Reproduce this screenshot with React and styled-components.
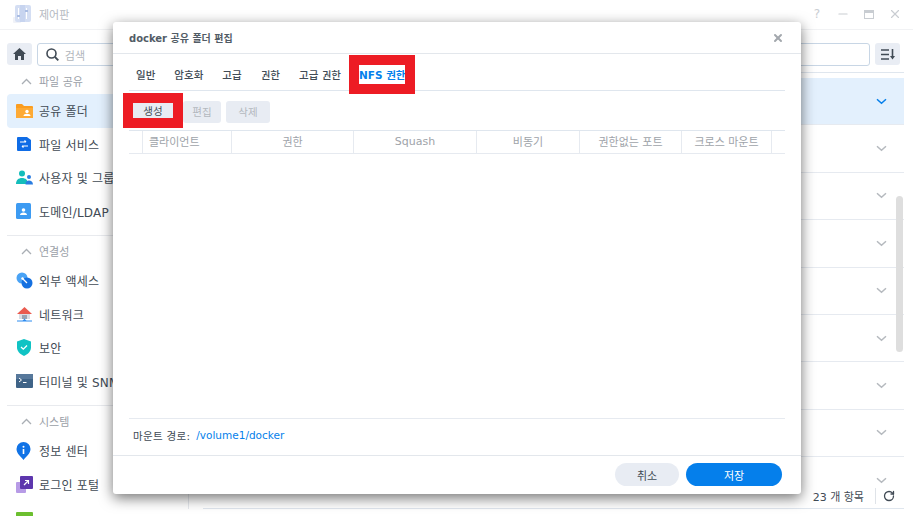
import React from "react";
import styled, { createGlobalStyle } from "styled-components";
import { RotateCw, Minus, X } from "lucide-react";

const GlobalStyle = createGlobalStyle`
  html, body {
    margin: 0;
    padding: 0;
    background: #fff;
  }
  * {
    box-sizing: border-box;
  }
`;

const Page = styled.div`
  position: relative;
  width: 913px;
  height: 516px;
  overflow: hidden;
  background: #fff;
  color: #414b55;
  font-family: "DejaVu Sans", "Noto Sans CJK KR", sans-serif;
  font-size: 11px;
`;

const TitleBar = styled.header`
  height: 30px;
  display: flex;
  align-items: center;
  padding: 0 5px 1px 12px;
  border-bottom: 1px solid #f1f2f4;
  > svg {
    opacity: 0.75;
  }
`;

const AppName = styled.span`
  margin-left: 7px;
  color: #b4b9bf;
  font-size: 11px;
  flex: 1;
`;

const WindowButton = styled.span`
  width: 26px;
  display: flex;
  align-items: center;
  justify-content: center;
  color: #c9cdd2;
  font-size: 12px;
`;

const Toolbar = styled.div`
  height: 42px;
  display: flex;
  align-items: flex-start;
  padding: 13px 13px 0 7px;
`;

const IconButton = styled.button`
  width: 25px;
  height: 22px;
  padding: 0;
  display: flex;
  align-items: center;
  justify-content: center;
  border: 0;
  border-radius: 3px;
  background: #e9edf4;
  color: #414b55;
`;

const SortButton = styled(IconButton)`
  margin-left: 5px;
`;

const SearchField = styled.div`
  height: 23px;
  display: flex;
  align-items: center;
  gap: 6px;
  padding: 0 8px;
  border: 1px solid #c8d6e5;
  border-radius: 3px;
  color: #b0b5bb;
  width: ${(p) => p.$width}px;
  margin-left: ${(p) => p.$gap}px;
  svg {
    color: #414b55;
  }
`;

const Body = styled.div`
  display: flex;
`;

const Sidebar = styled.nav`
  width: 188px;
  flex: none;
  padding: 0 0 0 7px;
`;

const Section = styled.section`
  border-top: ${(p) => (p.$first ? "0" : "1px solid #e8eaee")};
  padding: ${(p) => (p.$first ? "0" : "2px")} 0 7px;
`;

const SectionHead = styled.div`
  height: ${(p) => (p.$first ? "22px" : "26px")};
  padding: ${(p) => (p.$first ? "0 0 4px 13px" : "0 0 0 13px")};
  display: flex;
  align-items: center;
  gap: 6px;
  color: #9aa0a7;
  font-size: 11px;
  svg {
    color: #a9aeb4;
  }
`;

const NavItem = styled.div`
  height: 33.5px;
  display: flex;
  align-items: center;
  padding-left: 9px;
  border-radius: 4px;
  white-space: nowrap;
  font-size: 12px;
  letter-spacing: 0.2px;
  background: ${(p) => (p.$active ? "#e3f0fd" : "transparent")};
`;

const NavIcon = styled.span`
  width: 23px;
  flex: none;
  display: flex;
  align-items: center;
`;

const Main = styled.main`
  flex: 1;
  height: 437px;
  margin-right: 9px;
  padding-left: 14px;
  display: flex;
  flex-direction: column;
  border-left: 1px solid #e6e9ee;
`;

const List = styled.div`
  position: relative;
  height: 413px;
  overflow: hidden;
  padding-top: 5px;
  border-top: 1px solid #dfe6ee;
`;

const Row = styled.div`
  height: 47.4px;
  display: flex;
  align-items: center;
  justify-content: flex-end;
  padding-right: 17px;
  border-bottom: 1px solid #e6eaf0;
  color: ${(p) => (p.$active ? "#057feb" : "#b5b9be")};
  background: ${(p) => (p.$active ? "#e3f0fd" : "transparent")};
`;

const ScrollThumb = styled.div`
  position: absolute;
  top: 123px;
  right: 1px;
  width: 7px;
  height: 156px;
  border-radius: 4px;
  background: #dedede;
`;

const ListFooter = styled.div`
  height: 24px;
  display: flex;
  align-items: center;
  justify-content: flex-end;
  padding: 0 9px 2px 0;
  border-bottom: 1px solid #dfe6ee;
  font-size: 11px;
`;

const FooterSep = styled.span`
  width: 1px;
  height: 16px;
  margin: 0 7px 0 11px;
  background: #dfe3e8;
`;

const Modal = styled.div`
  position: absolute;
  left: 113px;
  top: 22px;
  width: 688px;
  height: 472px;
  display: flex;
  flex-direction: column;
  background: #fff;
  border-radius: 3px;
  box-shadow: 0 4px 14px rgba(0, 0, 0, 0.55);
`;

const ModalHead = styled.div`
  height: 32px;
  flex: none;
  display: flex;
  align-items: center;
  justify-content: space-between;
  padding: 0 17px 0 16px;
  border-bottom: 1px solid #e3e7ec;
  font-weight: 700;
  font-size: 10px;
  color: #525c66;
  svg {
    color: #a3a8ad;
  }
`;

const ModalBody = styled.div`
  position: relative;
  flex: 1;
  display: flex;
  flex-direction: column;
  padding: 0 16px;
`;

const Tabs = styled.div`
  height: 37px;
  flex: none;
  display: flex;
  align-items: center;
  gap: 19px;
  padding: 5px 7px 0;
  border-bottom: 1px solid #dfe6ee;
`;

const Tab = styled.span`
  font-size: 10.5px;
  font-weight: ${(p) => (p.$active ? 700 : 500)};
  color: ${(p) => (p.$active ? "#057feb" : "#414b55")};
  white-space: nowrap;
`;

const NfsTab = styled(Tab)`
  position: relative;
  z-index: 1;
  margin-left: -1px;
  padding: 2px 0;
  background: #fff;
  outline: 10px solid #ed1c24;
`;

const Actions = styled.div`
  height: 39px;
  flex: none;
  display: flex;
  align-items: center;
  gap: 5px;
  padding-top: 2px;
`;

const ActionButton = styled.button`
  width: ${(p) => p.$width}px;
  height: 22px;
  padding: 0;
  border: 0;
  border-radius: 3px;
  background: #e8ecf3;
  color: #b3b8be;
  font: inherit;
  font-size: 10.5px;
`;

const CreateButton = styled(ActionButton)`
  position: relative;
  width: 40px;
  height: 15px;
  margin: 0 5px 3px 4px;
  border-radius: 0;
  color: #414b55;
  outline: 10px solid #ed1c24;
`;

const GridHead = styled.div`
  height: 24px;
  flex: none;
  display: grid;
  grid-template-columns: 14px 89px 122px 123px 103px 102px 90px 1fr;
  border-top: 1px solid #dfe6ee;
  border-bottom: 1px solid #e6eaf0;
`;

const GridCell = styled.div`
  display: flex;
  align-items: center;
  justify-content: ${(p) => (p.$left ? "flex-start" : "center")};
  padding: 0 0 2px ${(p) => (p.$left ? "6px" : "0")};
  border-right: 1px solid #e6eaf0;
  color: #9ea3a9;
  font-size: 11px;
  white-space: nowrap;
`;

const GridEnd = styled.div``;

const GridBody = styled.div`
  flex: 1;
`;

const MountPath = styled.div`
  height: 37px;
  flex: none;
  display: flex;
  align-items: center;
  gap: 6px;
  padding: 0 0 4px 4px;
  border-top: 1px solid #e6eaf0;
  font-size: 10.5px;
  letter-spacing: 0.3px;
  a {
    color: #057feb;
    font-size: 10.5px;
    letter-spacing: 0;
  }
`;

const ModalFoot = styled.div`
  height: 39px;
  flex: none;
  display: flex;
  align-items: center;
  justify-content: flex-end;
  gap: 7px;
  padding: 0 19px 1px 0;
  border-top: 1px solid #e3e7ec;
`;

const PillButton = styled.button`
  width: ${(p) => p.$width}px;
  height: 23px;
  padding: 0;
  border: 0;
  border-radius: 12px;
  background: ${(p) => (p.$primary ? "#057feb" : "#e8ecf3")};
  color: ${(p) => (p.$primary ? "#fff" : "#414b55")};
  font: inherit;
  font-size: 11px;
`;

const PanelIcon = () => (
  <svg width="20" height="20" viewBox="0 0 20 20">
    <rect x="1" y="13" width="8" height="6" rx="1" fill="#eceef6" />
    <rect x="3" y="1" width="16" height="17" rx="2" fill="#c6d4f0" />
    <rect x="8" y="1" width="5" height="17" fill="#b5c6ea" />
    <rect x="6" y="4" width="1" height="11" fill="#fff" />
    <rect x="14" y="4" width="1" height="11" fill="#fff" />
    <rect x="5" y="11" width="3" height="2" fill="#8ea7da" />
    <rect x="13" y="6" width="3" height="2" fill="#8ea7da" />
  </svg>
);

const HomeIcon = () => (
  <svg width="13" height="12" viewBox="0 0 13 12">
    <path d="M6.500 0L13 6h-2v6H8V8H5v4H2V6H0z" fill="#414b55" />
  </svg>
);

const SearchIcon = () => (
  <svg width="13" height="13" viewBox="0 0 13 13" fill="none">
    <circle cx="5.500" cy="5.500" r="4.500" stroke="currentColor" strokeWidth="1.600" />
    <path d="M9 9l3.300 3.300" stroke="currentColor" strokeWidth="1.800" />
  </svg>
);

const RowChevron = () => (
  <svg width="11" height="7" viewBox="0 0 11 7" fill="none">
    <path d="M1 1.200l4.500 4 4.500-4" stroke="currentColor" strokeWidth="1.500" />
  </svg>
);

const HeadChevron = () => (
  <svg width="13" height="7" viewBox="0 0 13 7" fill="none">
    <path d="M2 6l4.500-4.500L11 6" stroke="currentColor" strokeWidth="1.300" />
  </svg>
);

const FolderIcon = () => (
  <svg width="17" height="16" viewBox="0 0 17 16">
    <path d="M0 2a1 1 0 0 1 1-1h5l2 2h8a1 1 0 0 1 1 1v11H0z" fill="#fb9d1f" />
    <path d="M0 5h17v10H0z" fill="#fdaa35" />
    <circle cx="11" cy="8.500" r="1.700" fill="#fff" />
    <path d="M7.500 13c0-1.600 1.500-2.300 3.500-2.300s3.500.7 3.500 2.300z" fill="#fff" />
  </svg>
);

const FileServiceIcon = () => (
  <svg width="16" height="16" viewBox="0 0 16 16">
    <path d="M1 2a1 1 0 0 1 1-1h9l4 3v10a1 1 0 0 1-1 1H2a1 1 0 0 1-1-1z" fill="#0f6ce6" />
    <path d="M4 6h6M10 6L8.500 4.500M12 10H6M6 10l1.500 1.500" stroke="#fff" strokeWidth="1.200" fill="none" />
  </svg>
);

const UsersIcon = () => (
  <svg width="17" height="16" viewBox="0 0 17 16">
    <circle cx="6" cy="3.500" r="3" fill="#14bdbb" />
    <path d="M0 14c0-4 2.500-6 6-6s6 2 6 6z" fill="#14bdbb" />
    <circle cx="13" cy="7" r="2" fill="#2a7de1" />
    <path d="M9.500 14.500c0-2.500 1.500-4 3.500-4s4 1.500 4 4z" fill="#2a7de1" />
  </svg>
);

const DomainIcon = () => (
  <svg width="15" height="16" viewBox="0 0 15 16">
    <rect width="15" height="16" rx="1.500" fill="#3d9bf2" />
    <circle cx="7.500" cy="7" r="1.800" fill="#fff" />
    <path d="M4 12c0-1.800 1.500-2.600 3.500-2.600S11 10.200 11 12z" fill="#fff" />
  </svg>
);

const ExternalIcon = () => (
  <svg width="17" height="17" viewBox="0 0 17 17">
    <circle cx="6" cy="6" r="5.500" fill="#4aa3f5" />
    <circle cx="11" cy="11" r="5.500" fill="#1570e0" />
    <path d="M6 6l5 5" stroke="#fff" strokeWidth="1.300" />
    <circle cx="6.500" cy="6.500" r="1.200" fill="#fff" />
  </svg>
);

const NetworkIcon = () => (
  <svg width="17" height="17" viewBox="0 0 17 17">
    <path d="M8.500 1L1 8h15z" fill="#ea5b4f" />
    <path d="M3 8h11v5H3z" fill="#d9dde4" />
    <path d="M6 9h5v4H6z" fill="#9aa4b2" />
    <path d="M1 15h15" stroke="#2d8cf0" strokeWidth="1" />
    <path d="M8.500 12.500l2 2.500h-4z" fill="#2d8cf0" />
  </svg>
);

const ShieldIcon = () => (
  <svg width="16" height="17" viewBox="0 0 16 17">
    <path d="M8 0l7 2.500v6c0 4-3.500 7-7 8.500-3.500-1.500-7-4.500-7-8.500v-6z" fill="#10c3c4" />
    <path d="M5 8l2.300 2.200L11 6.500" stroke="#fff" strokeWidth="1.300" fill="none" />
  </svg>
);

const TerminalIcon = () => (
  <svg width="17" height="14" viewBox="0 0 17 14">
    <rect width="17" height="14" rx="1" fill="#3f6387" />
    <rect width="17" height="5" fill="#57789b" />
    <path d="M3 4l2.500 2L3 8M7 8.500h3.500" stroke="#fff" strokeWidth="1" fill="none" />
  </svg>
);

const InfoIcon = () => (
  <svg width="15" height="18" viewBox="0 0 15 18">
    <path d="M7.500 0a7 7 0 0 1 7 7c0 4.500-4 7-7 11-3-4-7-6.500-7-11a7 7 0 0 1 7-7z" fill="#1173e6" />
    <rect x="6.700" y="7" width="1.600" height="5" fill="#fff" />
    <circle cx="7.500" cy="4.700" r="1" fill="#fff" />
  </svg>
);

const PortalIcon = () => (
  <svg width="17" height="17" viewBox="0 0 17 17">
    <rect y="6" width="10" height="11" rx="1" fill="#b79be6" />
    <rect x="4" y="0" width="13" height="13" rx="1" fill="#5d36ad" />
    <path d="M8 9l4-4M9 4.500h3.500V8" stroke="#fff" strokeWidth="1.200" fill="none" />
  </svg>
);

const GreenIcon = () => (
  <svg width="17" height="11" viewBox="0 0 17 11">
    <rect width="17" height="11" rx="1" fill="#6cbf2f" />
  </svg>
);

const SortIcon = () => (
  <svg width="14" height="11" viewBox="0 0 14 11">
    <path d="M0 1h8M0 5.500h8M0 10h8" stroke="#414b55" strokeWidth="1.300" />
    <path d="M11.500 0v8" stroke="#414b55" strokeWidth="1.600" />
    <path d="M9 7h5l-2.500 3.500z" fill="#414b55" />
  </svg>
);

const MaximizeIcon = () => (
  <svg width="10" height="9" viewBox="0 0 10 9">
    <rect x="0.500" y="0.500" width="9" height="8" fill="none" stroke="currentColor" />
    <rect width="10" height="3" fill="currentColor" />
  </svg>
);

const sections = [
  {
    title: "파일 공유",
    items: [
      { label: "공유 폴더", icon: <FolderIcon />, active: true },
      { label: "파일 서비스", icon: <FileServiceIcon /> },
      { label: "사용자 및 그룹", icon: <UsersIcon /> },
      { label: "도메인/LDAP", icon: <DomainIcon /> },
    ],
  },
  {
    title: "연결성",
    items: [
      { label: "외부 액세스", icon: <ExternalIcon /> },
      { label: "네트워크", icon: <NetworkIcon /> },
      { label: "보안", icon: <ShieldIcon /> },
      { label: "터미널 및 SNMP", icon: <TerminalIcon /> },
    ],
  },
  {
    title: "시스템",
    items: [
      { label: "정보 센터", icon: <InfoIcon /> },
      { label: "로그인 포털", icon: <PortalIcon /> },
      { label: "", icon: <GreenIcon /> },
    ],
  },
];

const columns = ["권한", "Squash", "비동기", "권한없는 포트", "크로스 마운트"];

export default function App() {
  return (
    <Page>
      <GlobalStyle />
      <TitleBar>
        <PanelIcon />
        <AppName>제어판</AppName>
        <WindowButton>?</WindowButton>
        <WindowButton>
          <Minus size={14} />
        </WindowButton>
        <WindowButton>
          <MaximizeIcon />
        </WindowButton>
        <WindowButton>
          <X size={14} />
        </WindowButton>
      </TitleBar>
      <Toolbar>
        <IconButton>
          <HomeIcon />
        </IconButton>
        <SearchField $width={160} $gap={5}>
          <SearchIcon />
          검색
        </SearchField>
        <SearchField $width={671} $gap={7} />
        <SortButton>
          <SortIcon />
        </SortButton>
      </Toolbar>
      <Body>
        <Sidebar>
          {sections.map((section, i) => (
            <Section key={section.title} $first={i === 0}>
              <SectionHead $first={i === 0}>
                <HeadChevron />
                {section.title}
              </SectionHead>
              {section.items.map((item) => (
                <NavItem key={item.label} $active={item.active}>
                  <NavIcon>{item.icon}</NavIcon>
                  {item.label}
                </NavItem>
              ))}
            </Section>
          ))}
        </Sidebar>
        <Main>
          <List>
            {Array.from({ length: 9 }, (_, i) => (
              <Row key={i} $active={i === 0}>
                <RowChevron />
              </Row>
            ))}
            <ScrollThumb />
          </List>
          <ListFooter>
            23 개 항목
            <FooterSep />
            <RotateCw size={12} strokeWidth={2.6} />
          </ListFooter>
        </Main>
      </Body>
      <Modal>
        <ModalHead>
          docker 공유 폴더 편집
          <X size={12} strokeWidth={4} />
        </ModalHead>
        <ModalBody>
          <Tabs>
            <Tab>일반</Tab>
            <Tab>암호화</Tab>
            <Tab>고급</Tab>
            <Tab>권한</Tab>
            <Tab>고급 권한</Tab>
            <NfsTab $active>NFS 권한</NfsTab>
          </Tabs>
          <Actions>
            <CreateButton>생성</CreateButton>
            <ActionButton $width={38}>편집</ActionButton>
            <ActionButton $width={44}>삭제</ActionButton>
          </Actions>
          <GridHead>
            <GridCell />
            <GridCell $left>클라이언트</GridCell>
            {columns.map((c) => (
              <GridCell key={c}>{c}</GridCell>
            ))}
            <GridEnd />
          </GridHead>
          <GridBody />
          <MountPath>
            마운트 경로: <a>/volume1/docker</a>
          </MountPath>
        </ModalBody>
        <ModalFoot>
          <PillButton $width={64}>취소</PillButton>
          <PillButton $width={96} $primary>
            저장
          </PillButton>
        </ModalFoot>
      </Modal>
    </Page>
  );
}
